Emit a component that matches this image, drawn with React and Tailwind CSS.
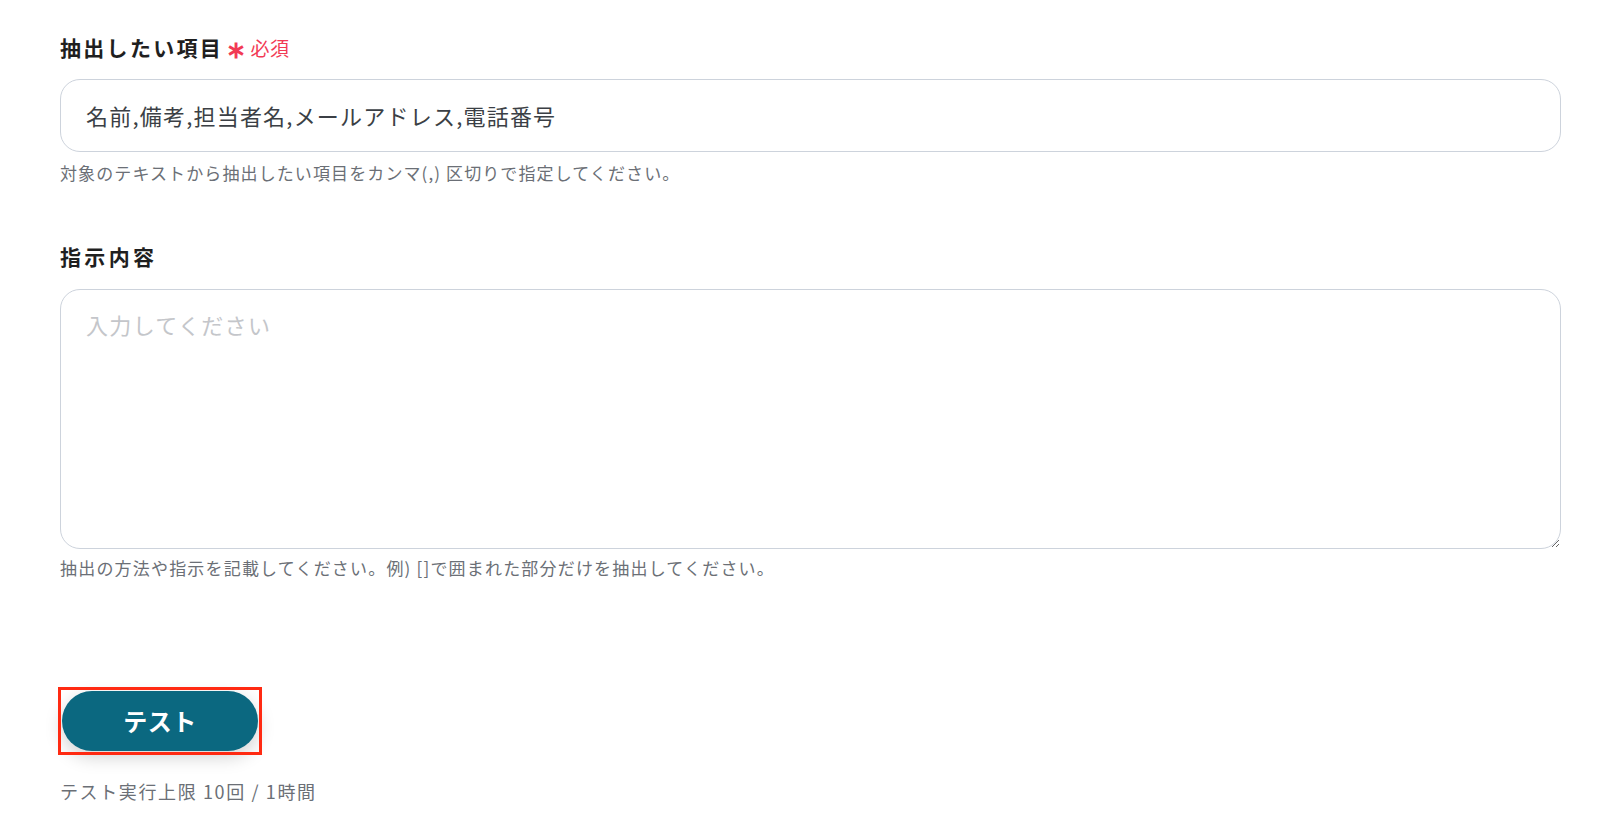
export default function App() {
  const font = { fontFamily: '"Noto Sans CJK JP", "Noto Sans", sans-serif' };
  return (
    <div className="min-h-screen bg-white" style={font}>
      <div className="pl-[60px] pr-[39px] pt-[33px]">
        {/* 抽出したい項目 */}
        <div className="flex items-center gap-[3px] h-[30px]">
          <span className="text-[21px] font-bold text-[#1f1f1f] tracking-[0.11em]">抽出したい項目</span>
          <span className="text-[19px] text-[#f23a55] flex items-center gap-[4px] tracking-[0.02em]">
            <span className="text-[24px] leading-none font-bold">∗</span>必須
          </span>
        </div>
        <div className="mt-[16px] h-[73px] rounded-[20px] border border-[#cdd3dc] flex items-center px-[25px]">
          <span className="text-[22px] text-[#3b3f45] tracking-[0.055em]">名前,備考,担当者名,メールアドレス,電話番号</span>
        </div>
        <p className="mt-[8px] text-[17px] text-[#6b6f76] tracking-[0.065em] leading-[26px]">
          対象のテキストから抽出したい項目をカンマ(,) 区切りで指定してください。
        </p>

        {/* 指示内容 */}
        <div className="mt-[56px] h-[30px] flex items-center">
          <span className="text-[21px] font-bold text-[#1f1f1f] tracking-[0.16em]">指示内容</span>
        </div>
        <textarea
          className="mt-[17px] block w-full h-[260px] rounded-[20px] border border-[#cdd3dc] px-[25px] py-[18px] text-[22px] tracking-[0.06em] text-[#3b3f45] placeholder:text-[#c4c6ca] outline-none resize-y"
          placeholder="入力してください"
        />
        <p className="mt-[6px] text-[17px] text-[#6b6f76] tracking-[0.07em] leading-[26px]">
          抽出の方法や指示を記載してください。例) []で囲まれた部分だけを抽出してください。
        </p>

        {/* テスト */}
        <div className="mt-[110px] ml-[2px] inline-block outline-[3px] outline-[#ff2a12] outline-offset-[1px]">
          <button className="block w-[196px] h-[60px] rounded-full bg-[#0b6880] text-white text-[24px] font-bold tracking-[0.02em] shadow-[0_6px_18px_rgba(0,0,0,0.18)]">
            テスト
          </button>
        </div>
        <p className="mt-[27px] text-[18px] text-[#6b6f76] tracking-[0.09em]">テスト実行上限 10回 / 1時間</p>
      </div>
    </div>
  );
}
